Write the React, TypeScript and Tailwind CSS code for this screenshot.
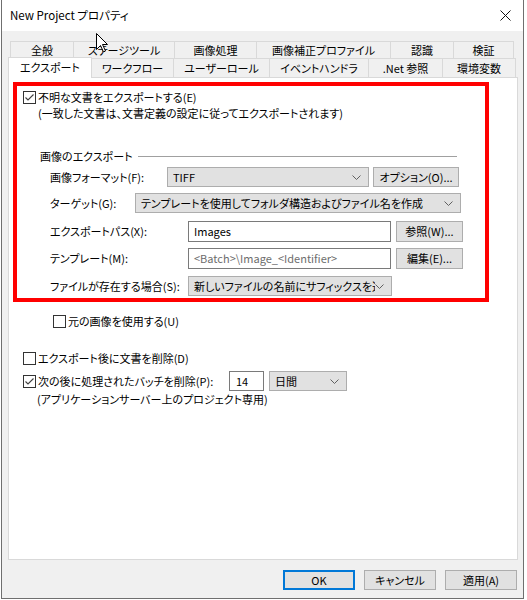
import clsx from "clsx"

const font = "font-['Noto_Sans_CJK_JP',sans-serif] [font-feature-settings:'palt']"

const Check = ({ checked }: { checked?: boolean }) => (
  <div className="w-[13px] h-[13px] border border-[#333333] bg-white flex items-center justify-center shrink-0">
    {checked && (
      <svg width="11" height="11" viewBox="0 0 11 11">
        <path d="M1.5 5.5 L4 8 L9.5 2.5" fill="none" stroke="#404040" strokeWidth="1.1" />
      </svg>
    )}
  </div>
)

const Chevron = () => (
  <svg width="9" height="5" viewBox="0 0 9 5" className="shrink-0">
    <path d="M0.5 0.5 L4.5 4.5 L8.5 0.5" fill="none" stroke="#606060" strokeWidth="1" />
  </svg>
)

const Combo = ({ text, className }: { text: string; className: string }) => (
  <div className={clsx("bg-[#e1e1e1] border border-[#adadad] flex items-center pl-[5px] pr-[7px] shrink-0", className)}>
    <span className="flex-1 overflow-hidden whitespace-nowrap">{text}</span>
    <Chevron />
  </div>
)

const Btn = ({ text, className }: { text: string; className: string }) => (
  <div className={clsx("bg-[#e1e1e1] border border-[#adadad] flex items-center justify-center shrink-0 whitespace-nowrap", className)}>
    {text}
  </div>
)

const Input = ({ text, className }: { text: string; className: string }) => (
  <div className={clsx("bg-white border border-[#7a7a7a] flex items-center pl-[5px] shrink-0 whitespace-nowrap overflow-hidden", className)}>
    {text}
  </div>
)

const topTabs = [
  { label: "全般", w: "w-[63px]" },
  { label: "ステージツール", w: "w-[101px]" },
  { label: "画像処理", w: "w-[82px]" },
  { label: "画像補正プロファイル", w: "w-[134px]" },
  { label: "認識", w: "w-[63px]" },
  { label: "検証", w: "w-[61px]" },
]

const frontTabs = [
  { label: "ワークフロー", w: "w-[81px]" },
  { label: "ユーザーロール", w: "w-[96px]" },
  { label: "イベントハンドラ", w: "w-[99px]" },
  { label: ".Net 参照", w: "w-[74px]" },
  { label: "環境変数", w: "w-[74px]" },
]

export default function App() {
  return (
    <div className={clsx("w-[527px] h-[600px] bg-white text-[11px] text-black relative whitespace-nowrap", font)}>
      <div className="ml-px w-[523px] h-[599px] border border-t-0 border-[#6f6f6f] bg-[#f0f0f0] flex flex-col">
        {/* title bar */}
        <div className="h-[31px] bg-white flex items-center justify-between pl-[8px] pr-[12px] shrink-0">
          <span className="text-[11.5px]">New Project プロパティ</span>
          <svg width="11" height="11" viewBox="0 0 11 11">
            <path d="M0.5 0.5 L10.5 10.5 M10.5 0.5 L0.5 10.5" stroke="#111" strokeWidth="1" />
          </svg>
        </div>

        {/* tabs */}
        <div className="mt-[10px] ml-[8px] flex h-[17px]">
          {topTabs.map((t, i) => (
            <div
              key={t.label}
              className={clsx(
                "h-[17px] border-t border-l border-[#d9d9d9] flex items-center justify-center pt-px",
                t.w,
                i == topTabs.length - 1 && "border-r"
              )}
            >
              {t.label}
            </div>
          ))}
        </div>
        <div className="ml-[6px] flex h-[19px] relative z-10">
          <div className="w-[84px] h-[21px] -mt-px bg-white border border-b-0 border-[#d9d9d9] flex items-center justify-center pb-[2px]">
            エクスポート
          </div>
          {frontTabs.map((t, i) => (
            <div
              key={t.label}
              className={clsx(
                "h-[19px] border-t border-[#d9d9d9] flex items-center justify-center pt-px",
                t.w,
                i > 0 && "border-l",
                i == frontTabs.length - 1 && "border-r"
              )}
            >
              {t.label}
            </div>
          ))}
        </div>

        {/* page body */}
        <div className="ml-[6px] w-[510px] h-[483px] border border-[#d9d9d9] bg-white shrink-0">
          <div className="mt-[4px] ml-[4px] w-[476px] h-[220px] border-4 border-[#ff0000]">
            <div className="mt-[3px] ml-[6px] h-[16px] flex items-center gap-[2px]">
              <Check checked />
              <span>不明な文書をエクスポートする(E)</span>
            </div>
            <div className="ml-[21px] h-[16px] flex items-center">
              (一致した文書は、文書定義の設定に従ってエクスポートされます)
            </div>

            <div className="mt-[27px] ml-[23px] mr-[28px] h-[16px] flex items-center gap-[5px]">
              <span>画像のエクスポート</span>
              <div className="flex-1 h-px bg-[#a0a0a0]" />
            </div>

            <div className="mt-[3px] ml-[33px] h-[20px] flex items-center">
              <span className="w-[117px] shrink-0">画像フォーマット(F):</span>
              <Combo text="TIFF" className="w-[202px] h-[20px]" />
              <Btn text="オプション(O)..." className="ml-[4px] w-[86px] h-[20px]" />
            </div>

            <div className="mt-[6px] ml-[33px] h-[20px] flex items-center">
              <span className="w-[85px] shrink-0">ターゲット(G):</span>
              <Combo text="テンプレートを使用してフォルダ構造およびファイル名を作成" className="w-[326px] h-[20px] pl-[3px]" />
            </div>

            <div className="mt-[8px] ml-[33px] h-[21px] flex items-center">
              <span className="w-[138px] shrink-0">エクスポートパス(X):</span>
              <Input text="Images" className="w-[203px] h-[21px]" />
              <Btn text="参照(W)..." className="ml-[5px] w-[67px] h-[21px]" />
            </div>

            <div className="mt-[6px] ml-[33px] h-[21px] flex items-center">
              <span className="w-[138px] shrink-0">テンプレート(M):</span>
              <Input text="<Batch>\Image_<Identifier>" className="w-[203px] h-[21px] text-[#6d6d6d]" />
              <Btn text="編集(E)..." className="ml-[5px] w-[67px] h-[21px]" />
            </div>

            <div className="mt-[7px] ml-[33px] h-[20px] flex items-center">
              <span className="w-[138px] shrink-0">ファイルが存在する場合(S):</span>
              <Combo text="新しいファイルの名前にサフィックスを追加" className="w-[204px] h-[20px]" />
            </div>
          </div>

          <div className="mt-[11px] ml-[44px] h-[16px] flex items-center gap-[2px]">
            <Check />
            <span>元の画像を使用する(U)</span>
          </div>

          <div className="mt-[21px] ml-[14px] h-[16px] flex items-center gap-[2px]">
            <Check />
            <span>エクスポート後に文書を削除(D)</span>
          </div>

          <div className="mt-[5px] ml-[14px] h-[20px] flex items-center gap-[2px]">
            <Check checked />
            <span className="w-[189px] shrink-0">次の後に処理されたバッチを削除(P):</span>
            <Input text="14" className="w-[35px] h-[20px] pl-[6px]" />
            <Combo text="日間" className="ml-[3px] w-[78px] h-[20px]" />
          </div>

          <div className="ml-[28px] h-[16px] flex items-center">
            (アプリケーションサーバー上のプロジェクト専用)
          </div>
        </div>

        {/* dialog buttons */}
        <div className="mt-[10px] ml-[281px] flex gap-[9px]">
          <div className="w-[72px] h-[20px] bg-[#e1e1e1] border-2 border-[#0078d7] flex items-center justify-center">
            OK
          </div>
          <Btn text="キャンセル" className="w-[72px] h-[20px]" />
          <Btn text="適用(A)" className="w-[72px] h-[20px]" />
        </div>
      </div>

      {/* mouse pointer */}
      <svg width="13" height="20" viewBox="0 0 13 20" className="absolute left-[96px] top-[33px]">
        <path d="M0.5 0.5 L0.5 16.5 L4.5 12.5 L7.5 19 L9.5 18 L6.5 11.5 L11.5 11.5 Z" fill="#fff" stroke="#000" strokeWidth="1" />
      </svg>
    </div>
  )
}
